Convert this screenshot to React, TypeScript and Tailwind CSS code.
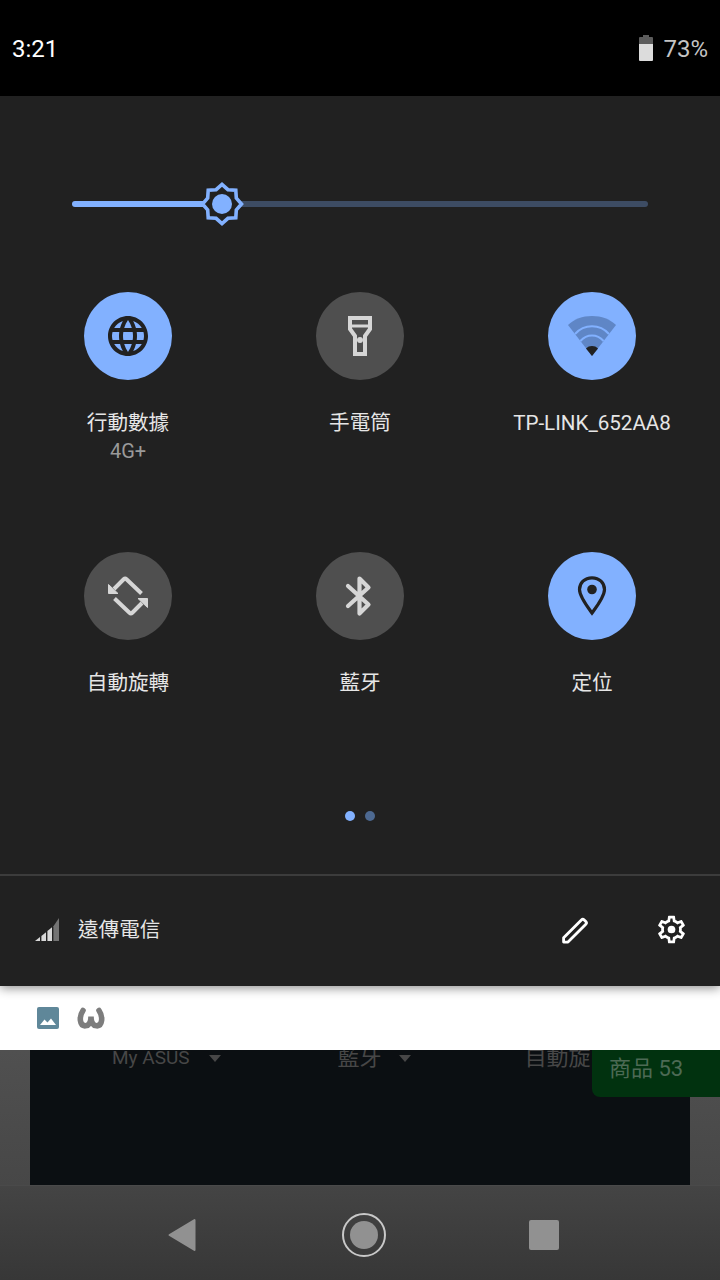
import React from "react";

const FONT = "font-['Roboto','Noto_Sans_CJK_TC',sans-serif]";

function Sun() {
  const pts: string[] = [];
  for (let i = 0; i < 16; i++) {
    const r = i % 2 === 0 ? 19.5 : 15.5;
    const a = (i * Math.PI) / 8;
    pts.push(`${(24 + r * Math.cos(a)).toFixed(2)},${(24 + r * Math.sin(a)).toFixed(2)}`);
  }
  return (
    <svg width="48" height="48" viewBox="0 0 48 48">
      <polygon points={pts.join(" ")} fill="#212121" stroke="#82b1ff" strokeWidth="3.6" strokeLinejoin="miter" />
      <circle cx="24" cy="24" r="10" fill="#82b1ff" />
    </svg>
  );
}

function Globe() {
  return (
    <svg width="48" height="48" viewBox="0 0 24 24" fill="#212121">
      <path d="M11.99 2C6.47 2 2 6.48 2 12s4.47 10 9.99 10C17.52 22 22 17.52 22 12S17.52 2 11.99 2zm6.93 6h-2.95c-.32-1.25-.78-2.45-1.38-3.56 1.84.63 3.37 1.91 4.33 3.56zM12 4.04c.83 1.2 1.48 2.53 1.91 3.96h-3.82c.43-1.43 1.08-2.76 1.91-3.96zM4.26 14C4.1 13.36 4 12.69 4 12s.1-1.36.26-2h3.38c-.08.66-.14 1.32-.14 2 0 .68.06 1.34.14 2H4.26zm.82 2h2.95c.32 1.25.78 2.45 1.38 3.56-1.84-.63-3.37-1.9-4.33-3.56zm2.95-8H5.08c.96-1.66 2.49-2.93 4.33-3.56C8.81 5.55 8.35 6.75 8.03 8zM12 19.96c-.83-1.2-1.48-2.53-1.91-3.96h3.82c-.43 1.43-1.08 2.76-1.91 3.96zM14.34 14H9.66c-.09-.66-.16-1.32-.16-2 0-.68.07-1.35.16-2h4.68c.09.65.16 1.32.16 2 0 .68-.07 1.34-.16 2zm.25 5.56c.6-1.11 1.06-2.31 1.38-3.56h2.95c-.96 1.65-2.49 2.93-4.33 3.56zM16.36 14c.08-.66.14-1.32.14-2 0-.68-.06-1.34-.14-2h3.38c.16.64.26 1.31.26 2s-.1 1.36-.26 2h-3.38z" />
    </svg>
  );
}

function Flashlight() {
  return (
    <svg width="60" height="60" viewBox="0 0 60 60" fill="none" stroke="#d6d6d6" strokeWidth="4">
      <path d="M20 12H40V23L35 30V48H25V30L20 23Z" strokeLinejoin="miter" />
      <path d="M20 20H40" strokeWidth="3" />
      <circle cx="30" cy="34" r="3" fill="#d6d6d6" stroke="none" />
    </svg>
  );
}

function Wifi() {
  return (
    <svg width="60" height="60" viewBox="0 0 60 60">
      <path d="M6 19C12 13.2 20.5 10 30 10S48 13.2 54 19L30 50Z" fill="#5f86c6" />
      <path d="M13 28C17.5 23 23.5 20.3 30 20.3S42.5 23 47 28" fill="none" stroke="#82b1ff" strokeWidth="2" />
      <path d="M18.4 35C21.5 31.5 25.5 29.5 30 29.5S38.5 31.5 41.6 35" fill="none" stroke="#82b1ff" strokeWidth="2" />
      <path d="M24 42.5C25.6 40.8 27.6 40 30 40S34.4 40.8 36 42.5L30 50Z" fill="#212121" />
    </svg>
  );
}

function Rotate() {
  return (
    <svg width="60" height="60" viewBox="0 0 60 60" fill="none" stroke="#d6d6d6" strokeWidth="4" strokeLinejoin="round">
      <path d="M43.5 27.5L28.5 13.2a2 2 0 0 0-2.8 0L16 23" />
      <path d="M16.5 32.5L31.5 46.8a2 2 0 0 0 2.8 0L44 37" />
      <path d="M10.5 18.5V27.5H20Z" fill="#d6d6d6" strokeWidth="1" />
      <path d="M49.5 41.5V32.5H40Z" fill="#d6d6d6" strokeWidth="1" />
    </svg>
  );
}

function Bluetooth() {
  return (
    <svg width="60" height="60" viewBox="0 0 60 60" fill="none" stroke="#d6d6d6" strokeWidth="4.2" strokeLinecap="round" strokeLinejoin="round">
      <path d="M18 20L38.5 38.5L29.5 47.5V12.5L38.5 21.5L18 40" />
    </svg>
  );
}

function Pin() {
  return (
    <svg width="48" height="48" viewBox="0 0 48 48" fill="none">
      <path d="M24 5.8C16.6 5.8 11.5 11 11.5 17.5C11.5 24.5 18.5 33.5 24 41C29.5 33.5 36.5 24.5 36.5 17.5C36.5 11 31.4 5.8 24 5.8Z" stroke="#212121" strokeWidth="3.2" />
      <circle cx="24" cy="17.5" r="4.8" fill="#212121" />
    </svg>
  );
}

function Signal() {
  return (
    <svg width="24" height="24" viewBox="0 0 24 24">
      <polygon points="0,23 5,19 5,23" fill="#d8d8d8" />
      <polygon points="6.4,17.9 11,14.2 11,23 6.4,23" fill="#d8d8d8" />
      <polygon points="12.4,13 17,9.3 17,23 12.4,23" fill="#d8d8d8" />
      <polygon points="18.4,8.2 24,0 24,23 18.4,23" fill="#737373" />
    </svg>
  );
}

function Pencil() {
  return (
    <svg width="30" height="30" viewBox="0 0 30 30" fill="none" stroke="#fff" strokeWidth="2.8" strokeLinejoin="round">
      <path d="M3.6 22.7L21.4 4.9a2 2 0 0 1 2.8 0l1.6 1.6a2 2 0 0 1 0 2.8L8 27.1l-4.4 0Z" />
    </svg>
  );
}

function Gear() {
  return (
    <svg width="33" height="33" viewBox="0 0 24 24" fill="#fff">
      <path d="M19.43 12.98c.04-.32.07-.64.07-.98 0-.34-.03-.66-.07-.98l2.11-1.65c.19-.15.24-.42.12-.64l-2-3.46c-.09-.16-.26-.25-.44-.25-.06 0-.12.01-.17.03l-2.49 1c-.52-.4-1.08-.73-1.69-.98l-.38-2.65C14.46 2.18 14.25 2 14 2h-4c-.25 0-.46.18-.49.42l-.38 2.65c-.61.25-1.17.59-1.69.98l-2.49-1c-.06-.02-.12-.03-.18-.03-.17 0-.34.09-.43.25l-2 3.46c-.13.22-.07.49.12.64l2.11 1.65c-.04.32-.07.65-.07.98 0 .33.03.66.07.98l-2.11 1.65c-.19.15-.24.42-.12.64l2 3.46c.09.16.26.25.44.25.06 0 .12-.01.17-.03l2.49-1c.52.4 1.08.73 1.69.98l.38 2.65c.03.24.24.42.49.42h4c.25 0 .46-.18.49-.42l.38-2.65c.61-.25 1.17-.59 1.69-.98l2.49 1c.06.02.12.03.18.03.17 0 .34-.09.43-.25l2-3.46c.12-.22.07-.49-.12-.64l-2.11-1.65zm-1.98-1.71c.04.31.05.52.05.73 0 .21-.02.43-.05.73l-.14 1.13.89.7 1.08.84-.7 1.21-1.27-.51-1.04-.42-.9.68c-.43.32-.84.56-1.25.73l-1.06.43-.16 1.13-.2 1.35h-1.4l-.19-1.35-.16-1.13-1.06-.43c-.43-.18-.83-.41-1.23-.71l-.91-.7-1.06.43-1.27.51-.7-1.21 1.08-.84.89-.7-.14-1.13c-.03-.31-.05-.54-.05-.74s.02-.43.05-.73l.14-1.13-.89-.7-1.08-.84.7-1.21 1.27.51 1.04.42.9-.68c.43-.32.84-.56 1.25-.73l1.06-.43.16-1.13.2-1.35h1.39l.19 1.35.16 1.13 1.06.43c.43.18.83.41 1.23.71l.91.7 1.06-.43 1.27-.51.7 1.21-1.07.85-.89.7.14 1.13z" />
      <circle cx="12" cy="12" r="2.8" />
    </svg>
  );
}

function Battery() {
  return (
    <svg width="14" height="26" viewBox="0 0 14 26">
      <path d="M4 0H10V2H13a1 1 0 0 1 1 1V9H0V3a1 1 0 0 1 1-1H4Z" fill="#5c5c5c" />
      <path d="M0 9H14V25a1 1 0 0 1-1 1H1a1 1 0 0 1-1-1Z" fill="#dcdcdc" />
    </svg>
  );
}

function ImageIcon() {
  return (
    <svg width="24" height="24" viewBox="0 0 24 24">
      <rect x="1" y="1" width="22" height="22" rx="2" fill="#5f8799" />
      <path d="M4 19L8.5 13.5L11.5 16.5L15 12.5L20 19Z" fill="#fff" />
    </svg>
  );
}

function LogoW() {
  return (
    <svg width="28" height="22" viewBox="0 0 28 22" fill="none" stroke="#7d7d7d" strokeWidth="5.6" strokeLinecap="round">
      <path d="M6 3.5C3.6 7 3 10 3.4 13.5C3.9 17.3 6 19 8.5 18.8C11.5 18.6 14 16 14 9.5C14 16 16.5 18.6 19.5 18.8C22 19 24.1 17.3 24.6 13.5C25 10 24.4 7 22 3.5" />
    </svg>
  );
}

function Tile({ on, icon, label, sub }: { on: boolean; icon: React.ReactNode; label: string; sub?: string }) {
  return (
    <div className="flex flex-col items-center">
      <div className={`flex h-[88px] w-[88px] items-center justify-center rounded-full ${on ? "bg-[#82b1ff]" : "bg-[#4f4f4f]"}`}>
        {icon}
      </div>
      <div className="mt-[29px] whitespace-nowrap text-[20.6px] leading-[28px] text-[#e6e6e6]">{label}</div>
      {sub && <div className="text-[20px] leading-[28px] text-[#9a9a9a]">{sub}</div>}
    </div>
  );
}

export default function App() {
  return (
    <div className={`flex h-[1280px] w-[720px] flex-col overflow-hidden bg-black ${FONT}`}>
      {/* status bar */}
      <div className="flex h-[96px] shrink-0 items-center justify-between px-3 pt-[2px] text-[24px] leading-[30px]">
        <span className="text-white">3:21</span>
        <div className="flex items-center gap-[10px]">
          <div className="mt-[-2px] flex">
            <Battery />
          </div>
          <span className="text-[#c4c4c4]">73%</span>
        </div>
      </div>

      {/* quick settings panel */}
      <div className="relative z-10 flex h-[890px] shrink-0 flex-col bg-[#212121] shadow-[0_2px_10px_rgba(0,0,0,0.45)]">
        <div className="relative mx-[72px] mt-[105px] flex h-[6px] rounded-full">
          <div className="w-[150px] rounded-l-full bg-[#82b1ff]" />
          <div className="flex-1 rounded-r-full bg-[#3d4c63]" />
          <div className="absolute left-[126px] top-[-21px]">
            <Sun />
          </div>
        </div>

        <div className="mt-[85px] grid grid-cols-3 grid-rows-[260px_260px] px-3">
          <Tile on icon={<Globe />} label="行動數據" sub="4G+" />
          <Tile on={false} icon={<Flashlight />} label="手電筒" />
          <Tile on icon={<Wifi />} label="TP-LINK_652AA8" />
          <Tile on={false} icon={<Rotate />} label="自動旋轉" />
          <Tile on={false} icon={<Bluetooth />} label="藍牙" />
          <Tile on icon={<Pin />} label="定位" />
        </div>

        <div className="mt-[-1px] flex justify-center gap-[10px]">
          <div className="h-[10px] w-[10px] rounded-full bg-[#82b1ff]" />
          <div className="h-[10px] w-[10px] rounded-full bg-[#4d6991]" />
        </div>

        <div className="mt-[53px] h-[2px] bg-[#3c3c3c]" />

        <div className="flex flex-1 items-center pb-[3px] pl-[35px]">
          <Signal />
          <span className="ml-[19px] flex-1 text-[20.6px] leading-[28px] text-[#e6e6e6]">遠傳電信</span>
          <div className="mr-[32px] flex items-center gap-[65px]">
            <Pencil />
            <Gear />
          </div>
        </div>
      </div>

      {/* notification peek */}
      <div className="relative z-[5] flex h-[64px] shrink-0 items-center bg-white pb-[1px] pl-[36px]">
        <ImageIcon />
        <div className="ml-[17px] flex">
          <LogoW />
        </div>
      </div>

      {/* dimmed app behind */}
      <div className="relative flex h-[135px] shrink-0 bg-gradient-to-b from-[#505050] to-[#474747] px-[30px]">
        <div className="flex flex-1 overflow-hidden bg-[#0b0f12]">
          <div className="mt-[-4px] flex h-[24px] items-center text-[#474747]">
            <span className="ml-[82px] text-[19px] leading-[24px]">My ASUS</span>
            <span className="ml-[19px] h-0 w-0 border-x-[6px] border-t-[7px] border-x-transparent border-t-[#474747]" />
            <span className="ml-[117px] text-[22px] leading-[24px]">藍牙</span>
            <span className="ml-[17px] h-0 w-0 border-x-[6px] border-t-[7px] border-x-transparent border-t-[#474747]" />
            <span className="ml-[114px] whitespace-nowrap text-[22px] leading-[24px]">自動旋</span>
          </div>
        </div>
        <div className="absolute right-0 top-0 flex h-[47px] w-[128px] items-center rounded-bl-[8px] bg-[#01320f] pb-[10px] pl-[17px] text-[22px] text-[#4d6a55]">
          商品 53
        </div>
      </div>

      {/* nav bar */}
      <div className="flex h-[95px] shrink-0 items-center border-t border-[#4a4a4a] bg-gradient-to-b from-[#444444] to-[#373737] pl-[168px] pt-[4px]">
        <svg width="30" height="34" viewBox="0 0 30 34" className="shrink-0">
          <path d="M26.5 2V32L1.5 17Z" fill="#919191" stroke="#919191" strokeWidth="2" strokeLinejoin="round" />
        </svg>
        <div className="ml-[144px] flex h-[44px] w-[44px] shrink-0 items-center justify-center rounded-full border-2 border-[#c8c8c8]">
          <div className="h-[28px] w-[28px] rounded-full bg-[#919191]" />
        </div>
        <div className="ml-[143px] h-[30px] w-[30px] shrink-0 rounded-[2px] bg-[#919191]" />
      </div>
    </div>
  );
}
